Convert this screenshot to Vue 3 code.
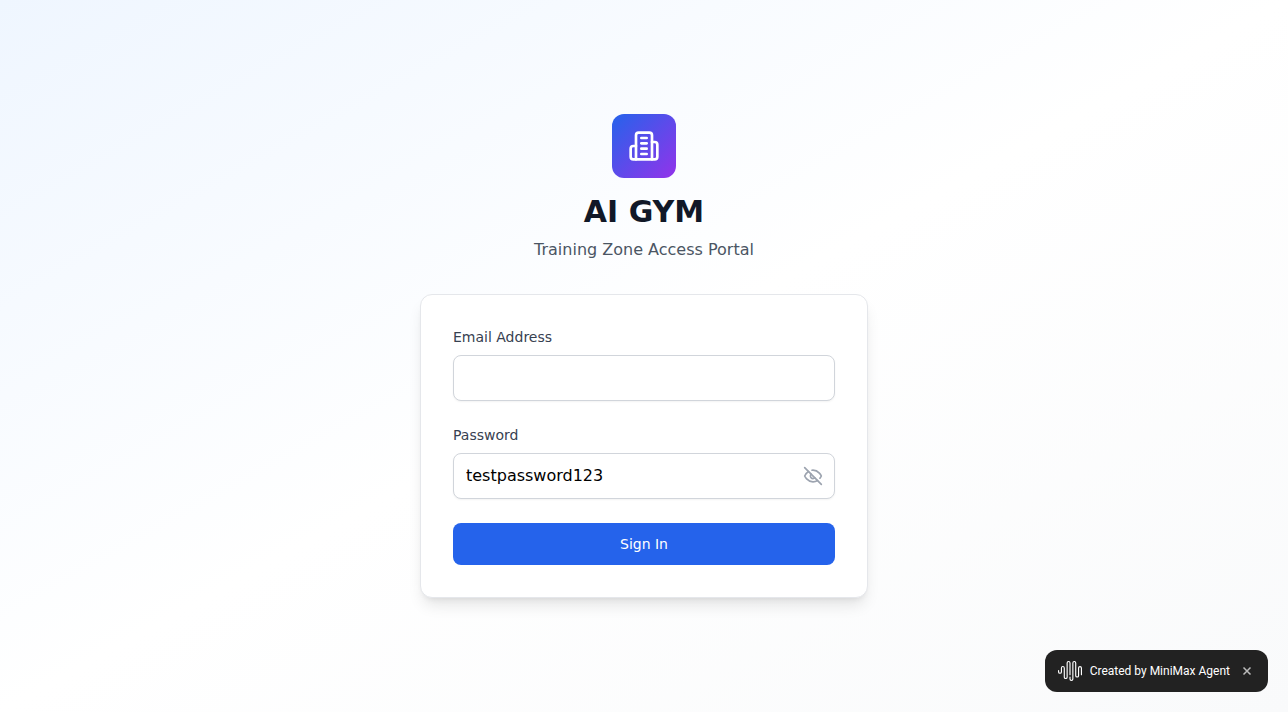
<script setup>
import { ref } from 'vue'

const email = ref('')
const password = ref('testpassword123')
const showPassword = ref(true)
const showBadge = ref(true)
</script>

<template>
  <main class="page">
    <div class="portal">
      <header class="brand">
        <div class="logo">
          <svg class="logo-icon" viewBox="0 0 24 24" aria-hidden="true">
            <path d="M6 22V4a2 2 0 0 1 2-2h8a2 2 0 0 1 2 2v18Z" />
            <path d="M6 12H4a2 2 0 0 0-2 2v6a2 2 0 0 0 2 2h2" />
            <path d="M18 9h2a2 2 0 0 1 2 2v9a2 2 0 0 1-2 2h-2" />
            <path d="M10 6h4" />
            <path d="M10 10h4" />
            <path d="M10 14h4" />
            <path d="M10 18h4" />
          </svg>
        </div>
        <h1>AI GYM</h1>
        <p>Training Zone Access Portal</p>
      </header>

      <form class="card" @submit.prevent>
        <div class="field">
          <label for="email">Email Address</label>
          <input id="email" v-model="email" type="email" autocomplete="email" />
        </div>
        <div class="field">
          <label for="password">Password</label>
          <div class="control">
            <input
              id="password"
              v-model="password"
              class="with-toggle"
              :type="showPassword ? 'text' : 'password'"
              spellcheck="false"
            />
            <button
              class="toggle"
              type="button"
              aria-label="Toggle password visibility"
              @click="showPassword = !showPassword"
            >
              <svg v-if="showPassword" viewBox="0 0 24 24" aria-hidden="true">
                <path d="M9.88 9.88a3 3 0 1 0 4.24 4.24" />
                <path d="M10.73 5.08A10.43 10.43 0 0 1 12 5c7 0 10 7 10 7a13.16 13.16 0 0 1-1.67 2.68" />
                <path d="M6.61 6.61A13.526 13.526 0 0 0 2 12s3 7 10 7a9.74 9.74 0 0 0 5.39-1.61" />
                <path d="M2 2l20 20" />
              </svg>
              <svg v-else viewBox="0 0 24 24" aria-hidden="true">
                <path d="M2 12s3-7 10-7 10 7 10 7-3 7-10 7-10-7-10-7Z" />
                <circle cx="12" cy="12" r="3" />
              </svg>
            </button>
          </div>
        </div>
        <button class="submit" type="submit">Sign In</button>
      </form>
    </div>

    <aside v-if="showBadge" class="badge">
      <svg class="wave" viewBox="0 0 24 24" aria-hidden="true">
        <path d="M11.43 3.92a.86.86 0 1 0-1.718 0v14.236a1.999 1.999 0 0 1-3.997 0V9.022a.86.86 0 1 0-1.718 0v3.87a1.999 1.999 0 0 1-3.997 0V11.49a.57.57 0 0 1 1.139 0v1.404a.86.86 0 0 0 1.719 0V9.022a1.999 1.999 0 0 1 3.997 0v9.134a.86.86 0 0 0 1.719 0V3.92a1.998 1.998 0 1 1 3.996 0v11.788a.57.57 0 1 1-1.139 0zm10.572 3.105a2 2 0 0 0-1.999 1.997v7.63a.86.86 0 0 1-1.718 0V3.923a1.999 1.999 0 0 0-3.997 0v16.16a.86.86 0 0 1-1.719 0V18.08a.57.57 0 1 0-1.138 0v2a1.998 1.998 0 0 0 3.996 0V3.92a.86.86 0 0 1 1.719 0v12.73a1.999 1.999 0 0 0 3.996 0V9.023a.86.86 0 1 1 1.72 0v6.686a.57.57 0 0 0 1.138 0V9.022a2 2 0 0 0-1.998-1.997z" />
      </svg>
      <span>Created by MiniMax Agent</span>
      <button class="close" type="button" aria-label="Close" @click="showBadge = false">
        <svg viewBox="0 0 10 10" aria-hidden="true"><path d="M1.5 1.5l7 7M8.5 1.5l-7 7" /></svg>
      </button>
    </aside>
  </main>
</template>

<style>
body {
  margin: 0;
}
</style>

<style scoped>
* {
  box-sizing: border-box;
}

.page {
  display: flex;
  align-items: center;
  justify-content: center;
  min-height: 100vh;
  padding: 16px;
  background: linear-gradient(to bottom right, #eff6ff, #ffffff, #f9fafb);
  font-family: "DejaVu Sans", sans-serif;
  font-size: 16px;
  line-height: 24px;
}

.portal {
  width: 100%;
  max-width: 448px;
}

.brand {
  margin-bottom: 32px;
  text-align: center;
}

.logo {
  display: flex;
  align-items: center;
  justify-content: center;
  width: 64px;
  height: 64px;
  margin: 0 auto 16px;
  border-radius: 12px;
  background: linear-gradient(to bottom right, #2563eb, #9333ea);
}

.logo-icon,
.toggle svg {
  fill: none;
  stroke: currentColor;
  stroke-width: 2;
  stroke-linecap: round;
  stroke-linejoin: round;
}

.logo-icon {
  width: 32px;
  height: 32px;
  color: #ffffff;
}

h1 {
  margin: 0 0 8px;
  color: #111827;
  font-size: 30px;
  font-weight: 700;
  line-height: 36px;
}

.brand p {
  margin: 0;
  color: #4b5563;
}

.card {
  display: flex;
  flex-direction: column;
  gap: 24px;
  padding: 32px;
  border: 1px solid #e5e7eb;
  border-radius: 12px;
  background: #ffffff;
  box-shadow: 0 10px 15px -3px rgb(0 0 0 / 0.1), 0 4px 6px -4px rgb(0 0 0 / 0.1);
}

label {
  display: block;
  margin-bottom: 8px;
  color: #374151;
  font-size: 14px;
  line-height: 20px;
}

input {
  display: block;
  width: 100%;
  height: 46px;
  padding: 10px 12px 12px;
  border: 1px solid #d1d5db;
  border-radius: 8px;
  background: #ffffff;
  box-shadow: 0 1px 2px 0 rgb(0 0 0 / 0.05);
  color: #000000;
  font: inherit;
  line-height: 22px;
}

.control {
  position: relative;
}

.with-toggle {
  padding-right: 40px;
}

button {
  padding: 0;
  border: 0;
  font: inherit;
  cursor: pointer;
}

.toggle {
  position: absolute;
  top: 0;
  right: 0;
  bottom: 0;
  display: flex;
  align-items: center;
  padding-right: 12px;
  background: none;
  color: #9ca3af;
}

.toggle svg {
  width: 20px;
  height: 20px;
}

.submit {
  padding: 11px 16px;
  border-radius: 8px;
  background: #2563eb;
  color: #ffffff;
  font-size: 14px;
  line-height: 20px;
}

.badge {
  position: fixed;
  right: 20px;
  bottom: 20px;
  display: flex;
  align-items: center;
  gap: 8px;
  height: 42px;
  padding: 0 16px 0 13px;
  border-radius: 12px;
  background: #222222;
  color: #ffffff;
  font-family: Roboto, sans-serif;
  font-size: 12px;
  font-weight: 400;
  white-space: nowrap;
}

.wave {
  width: 24px;
  height: 24px;
  fill: currentColor;
}

.close {
  display: flex;
  align-items: center;
  justify-content: center;
  width: 10px;
  height: 16px;
  margin-left: 4px;
  background: none;
  color: #bbbbbb;
}

.close svg {
  width: 10px;
  height: 10px;
  fill: none;
  stroke: currentColor;
  stroke-width: 1.5;
}
</style>
